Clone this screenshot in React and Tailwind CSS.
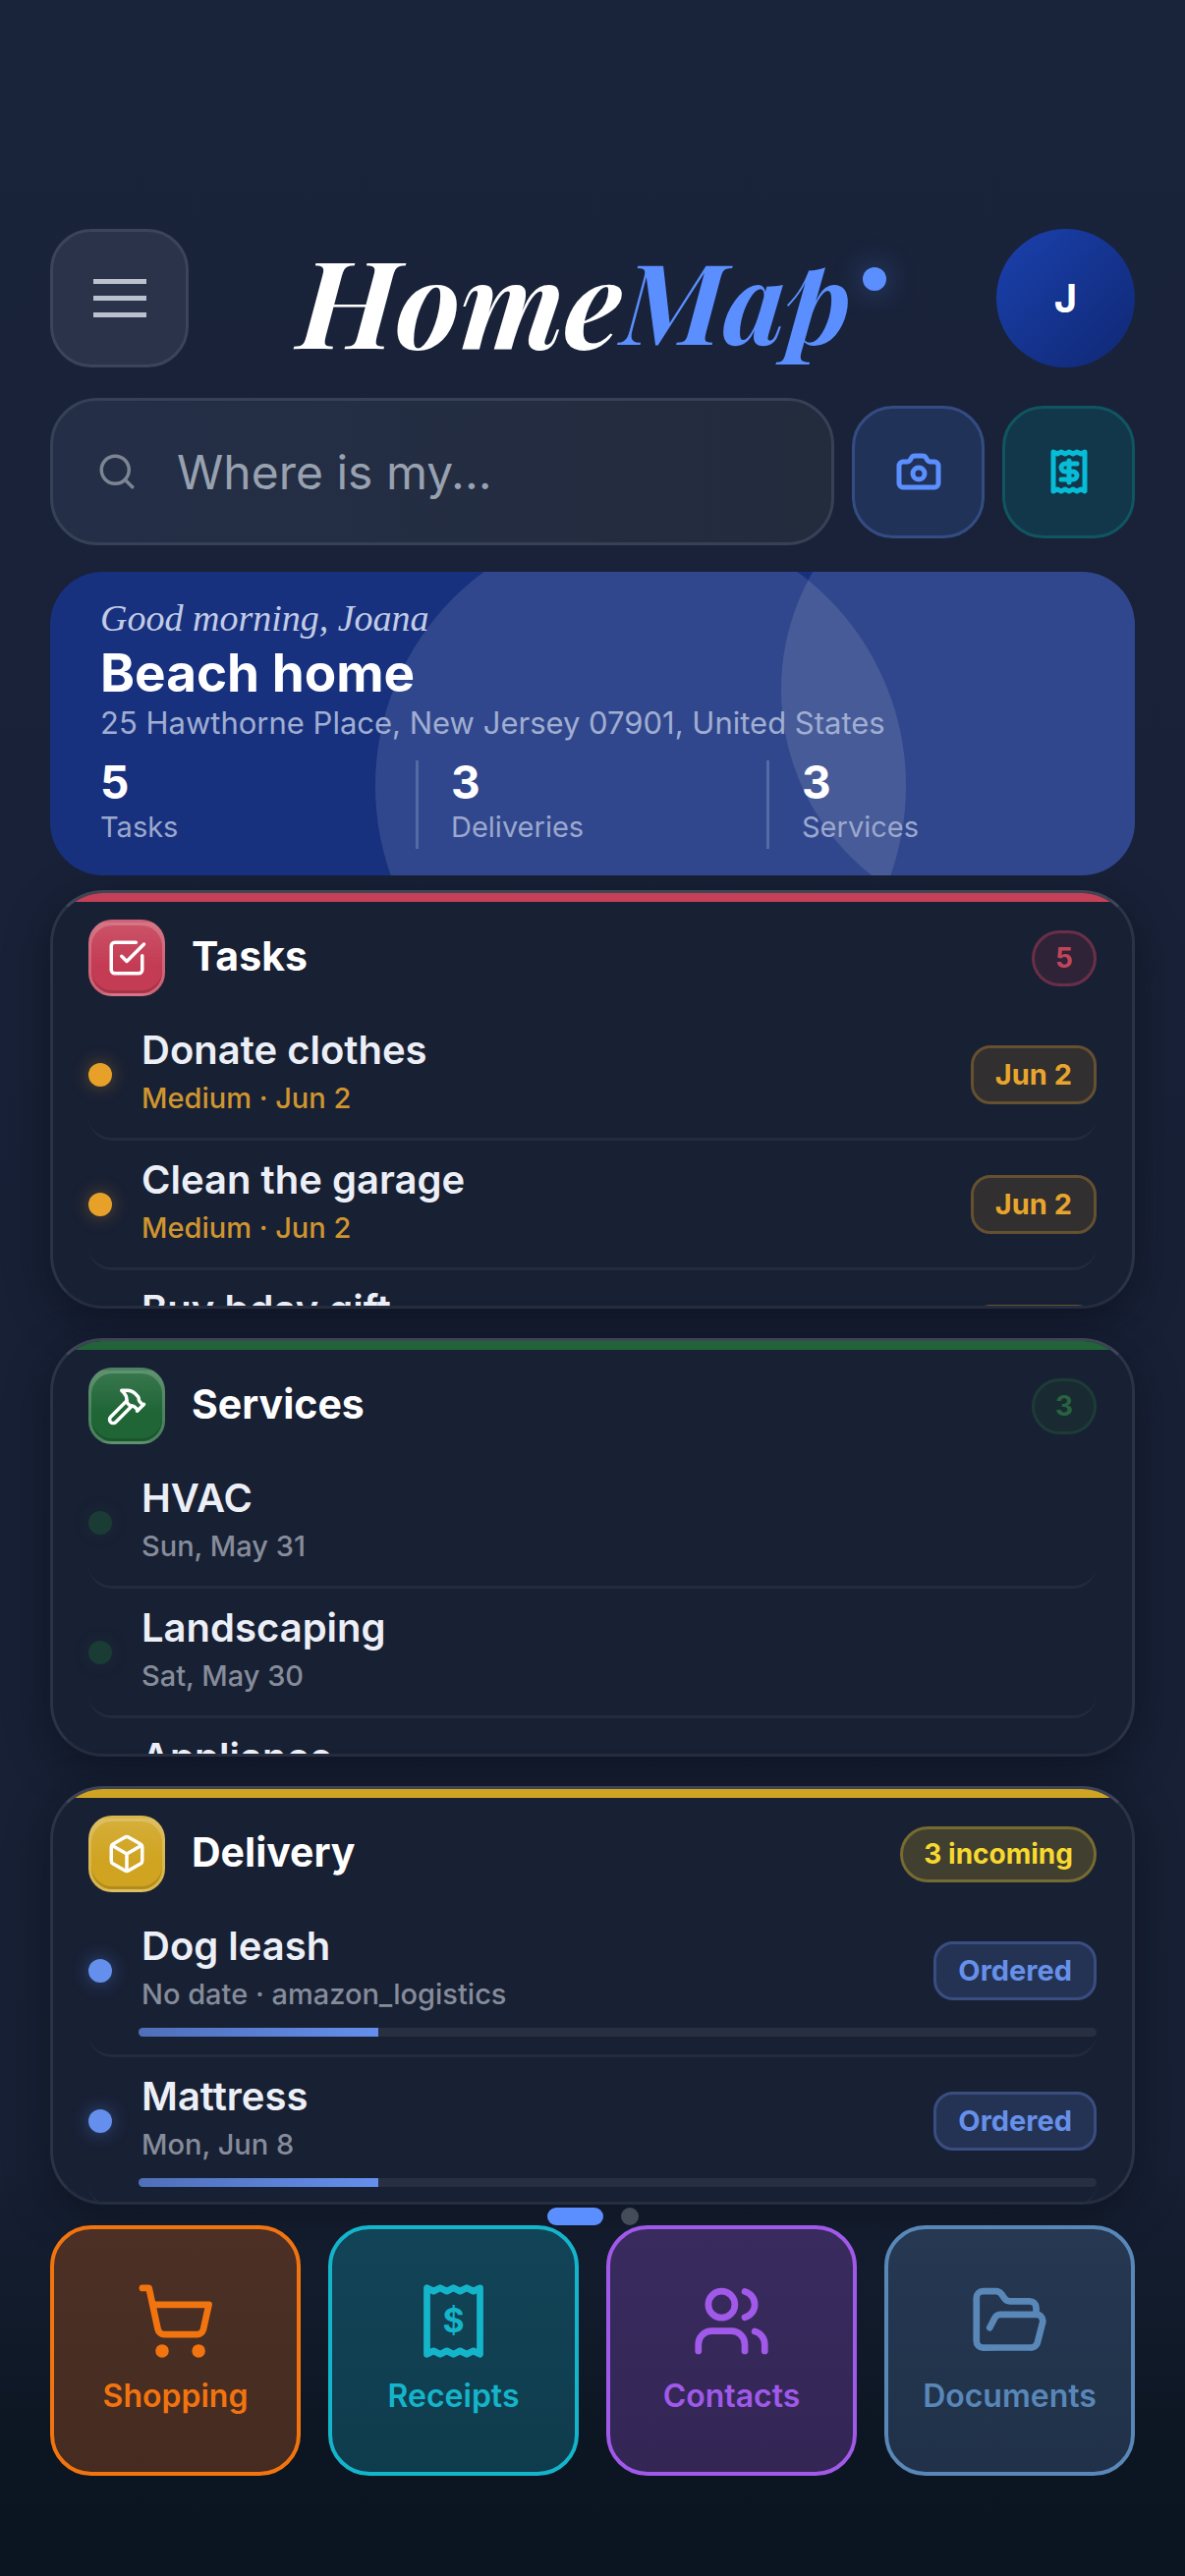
import React from 'react';
import { Box, Camera, FolderOpen, Hammer, Receipt, Search, ShoppingCart, SquareCheckBig, Users } from 'lucide-react';

const tasks = [
  { title: 'Donate clothes', sub: 'Medium · Jun 2', chip: 'Jun 2' },
  { title: 'Clean the garage', sub: 'Medium · Jun 2', chip: 'Jun 2' },
  { title: 'Buy bday gift', sub: 'Medium · Jun 2', chip: 'Jun 2' },
];

const services = [
  { title: 'HVAC', sub: 'Sun, May 31' },
  { title: 'Landscaping', sub: 'Sat, May 30' },
  { title: 'Appliance', sub: 'Fri, May 29' },
];

const deliveries = [
  { title: 'Dog leash', sub: 'No date · amazon_logistics', chip: 'Ordered', progress: 25 },
  { title: 'Mattress', sub: 'Mon, Jun 8', chip: 'Ordered', progress: 25 },
];

const stats = [
  { value: 5, label: 'Tasks' },
  { value: 3, label: 'Deliveries' },
  { value: 3, label: 'Services' },
];

const themes = {
  tasks: {
    bar: 'bg-[#c44056]',
    tile: 'bg-[#c43c54]',
    badge: 'bg-[#2f2437] border-[#6a2f48] text-[#c2445b]',
    dot: 'bg-[#e8a128] shadow-[0_0_18px_rgba(232,161,40,0.35)]',
    sub: 'text-[#cf952f]',
    chip: 'bg-[#312f2f] border-[#65502f] text-[#e8a52e]',
  },
  services: {
    bar: 'bg-[#236339]',
    tile: 'bg-[#1f6536]',
    badge: 'bg-[#1a2a33] border-[#1d3b37] text-[#27633e]',
    dot: 'bg-[#1b3b35] shadow-[0_0_18px_rgba(31,101,54,0.2)]',
    sub: 'text-[#868c9a]',
    chip: '',
  },
  delivery: {
    bar: 'bg-[#cfa423]',
    tile: 'bg-[#d0a420]',
    badge: 'bg-[#403f30] border-[#766b30] text-[#f7d92f]',
    dot: 'bg-[#648fec] shadow-[0_0_18px_rgba(91,143,255,0.4)]',
    sub: 'text-[#868c9a]',
    chip: 'bg-[#243354] border-[#3a4d80] text-[#6690ea]',
  },
};

const ReceiptDollar = ({ className }) => (
  <svg viewBox="0 0 24 24" fill="none" stroke="currentColor" strokeWidth="2" strokeLinejoin="round" className={className} aria-hidden="true">
    <path d="M4 2v20l2-1 2 1 2-1 2 1 2-1 2 1 2-1 2 1V2l-2 1-2-1-2 1-2-1-2 1-2-1-2 1Z" />
    <text x="12" y="15.5" textAnchor="middle" fontSize="10" fontWeight="700" fill="currentColor" stroke="none">$</text>
  </svg>
);

const Header = () => (
  <header className="flex items-center justify-between">
    <button
      type="button"
      aria-label="Menu"
      className="flex h-[141px] w-[141px] flex-col items-center justify-center gap-3 rounded-[42px] border-[3px] border-[#3b445a] bg-[#2b334a]"
    >
      <span className="h-[5px] w-[54px] bg-[#bcc2cd]" />
      <span className="h-[5px] w-[54px] bg-[#bcc2cd]" />
      <span className="h-[5px] w-[54px] bg-[#bcc2cd]" />
    </button>
    <h1 className="flex items-center font-['Playfair_Display','Liberation_Serif',serif] font-bold italic leading-none">
      <span className="text-[124px] text-white">Home</span>
      <span className="text-[114px] text-[#5b8fff]">Map</span>
      <span className="mb-10 ml-3 h-6 w-6 rounded-full bg-[#5b8fff] shadow-[0_0_30px_rgba(91,143,255,0.45)]" />
    </h1>
    <button
      type="button"
      className="h-[141px] w-[141px] rounded-full bg-linear-135 from-[#1a41ae] to-[#102874] text-[40px] font-bold text-white"
    >
      J
    </button>
  </header>
);

const SearchBar = () => (
  <div className="mt-[31px] flex items-center gap-[18px]">
    <label className="flex h-[150px] min-w-0 flex-1 items-center gap-10 rounded-[48px] border-[3px] border-[#374155] bg-linear-to-r from-[#242e47] to-[#232c3d] pl-11 pr-8">
      <Search className="h-[42px] w-[42px] shrink-0 text-[#7d8594]" />
      <input
        type="text"
        aria-label="Where is my..."
        placeholder="Where is my..."
        className="min-w-0 flex-1 bg-transparent text-5xl text-white outline-none placeholder:text-[#98a1af]"
      />
    </label>
    <button
      type="button"
      aria-label="Scan with camera"
      className="flex h-[135px] w-[135px] items-center justify-center rounded-[42px] border-[3px] border-[#344c82] bg-[#203257] text-[#5b8fff]"
    >
      <Camera className="h-12 w-12" strokeWidth={2.5} />
    </button>
    <button
      type="button"
      aria-label="Add receipt"
      className="flex h-[135px] w-[135px] items-center justify-center rounded-[42px] border-[3px] border-[#10555f] bg-[#12374a] text-[#07bcd6]"
    >
      <Receipt className="h-12 w-12" strokeWidth={2.5} />
    </button>
  </div>
);

const HomeCard = () => (
  <section className="relative mt-[27px] h-[309px] overflow-hidden rounded-[54px] bg-[#18317f] px-[51px] pt-5">
    <div className="absolute -bottom-[179px] left-[30%] h-[540px] w-[540px] rounded-full bg-white/11" />
    <div className="absolute -right-[120px] -top-[120px] h-[480px] w-[480px] rounded-full bg-white/11" />
    <div className="relative">
      <p className="font-['Satisfy','Liberation_Serif',cursive] text-[38px] italic leading-[54px] text-[#c3cce6]">Good morning, Joana</p>
      <h2 className="text-[53px] font-bold leading-[58px] text-white">Beach home</h2>
      <p className="text-[31px] leading-[44px] text-[#a0aed2]">25 Hawthorne Place, New Jersey 07901, United States</p>
      <dl className="mt-4 grid grid-cols-[324fr_357fr_321fr]">
        {stats.map((stat, i) => (
          <div
            key={stat.label}
            className={`flex h-[90px] flex-col-reverse justify-between border-[#546aa3] ${i < 2 ? 'border-r-[3px]' : ''} ${i > 0 ? 'pl-[33px]' : ''}`}
          >
            <dt className="text-[29px] leading-[44px] text-[#9ba8cd]">{stat.label}</dt>
            <dd className="text-[46px] font-bold leading-[44px] text-white">{stat.value}</dd>
          </div>
        ))}
      </dl>
    </div>
  </section>
);

const Row = ({ item, theme }) => (
  <li className="rounded-3xl border-b-[3px] border-[#232b3e]">
    <div className="flex items-center py-4">
      <span className={`h-6 w-6 shrink-0 rounded-full ${theme.dot}`} />
      <div className="ml-[30px] flex min-w-0 flex-1 flex-col gap-px">
        <h3 className="truncate text-[40px] font-semibold leading-[48px] text-[#eceff6]">{item.title}</h3>
        <p className={`text-[29px] font-medium leading-[48px] ${theme.sub}`}>{item.sub}</p>
      </div>
      {item.chip && (
        <span className={`rounded-[20px] border-[3px] px-[22px] text-[29px] font-bold leading-[54px] ${theme.chip}`}>{item.chip}</span>
      )}
    </div>
    {item.progress && (
      <div className="-mt-[6px] pb-[18px] pl-[51px]">
        <div className="h-[9px] overflow-hidden rounded-full bg-[#282f41]">
          <div className="h-full bg-linear-to-r from-[#4f6fb9] to-[#648fec]" style={{ width: `${item.progress}%` }} />
        </div>
      </div>
    )}
  </li>
);

const Panel = ({ title, badge, icon: Icon, theme, items }) => (
  <section className="h-[426px] overflow-hidden rounded-[54px] border-[3px] border-[#2b3346] border-b-[#252d40] border-t-[#3d4557] bg-[#182034] shadow-[0_12px_42px_rgba(10,12,22,0.55)]">
    <div className={`h-[9px] ${theme.bar}`} />
    <div className="px-9 pt-[18px]">
      <header className="flex items-center">
        <div
          className={`flex h-[78px] w-[78px] items-center justify-center rounded-3xl border-[3px] border-white/20 bg-linear-to-b from-white/12 to-transparent to-60% text-white shadow-[inset_0_3px_0_rgba(255,255,255,0.2),inset_0_-3px_0_rgba(0,0,0,0.15)] ${theme.tile}`}
        >
          <Icon className="h-[42px] w-[42px]" />
        </div>
        <h2 className="ml-[27px] flex-1 pb-[3px] text-[41px] font-bold text-white">{title}</h2>
        <span className={`rounded-full border-[3px] px-[21px] text-[28px] font-bold leading-[51px] ${theme.badge}`}>{badge}</span>
      </header>
      <ul className="mt-[15px]">
        {items.map((item) => (
          <Row key={item.title} item={item} theme={theme} />
        ))}
      </ul>
    </div>
  </section>
);

const shortcuts = [
  { label: 'Shopping', icon: ShoppingCart, style: 'border-[#f2740f] text-[#f2740f] from-[#4c3025] to-[#452b20]' },
  { label: 'Receipts', icon: ReceiptDollar, style: 'border-[#14b5cb] text-[#14b5cb] from-[#124457] to-[#0f3c4d]' },
  { label: 'Contacts', icon: Users, style: 'border-[#a059e8] text-[#a059e8] from-[#392b5e] to-[#332655]' },
  { label: 'Documents', icon: FolderOpen, style: 'border-[#5887b8] text-[#5887b8] from-[#263852] to-[#203149]' },
];

const App = () => {
  return (
    <div className="min-h-screen bg-[linear-gradient(180deg,#19233a_0%,#182036_50%,#172034_84%,#0c1622_95%,#0b1521_100%)] px-[51px] pb-[102px] pt-[233px] font-['Inter','Liberation_Sans',sans-serif]">
      <Header />
      <SearchBar />
      <main>
        <HomeCard />
        <div className="mt-[15px] flex flex-col gap-[30px]">
          <Panel title="Tasks" badge="5" icon={SquareCheckBig} theme={themes.tasks} items={tasks} />
          <Panel title="Services" badge="3" icon={Hammer} theme={themes.services} items={services} />
          <Panel title="Delivery" badge="3 incoming" icon={Box} theme={themes.delivery} items={deliveries} />
        </div>
        <div className="mt-[3px] flex justify-center gap-[18px]">
          <button type="button" aria-label="Page 1" className="h-[18px] w-[57px] rounded-full bg-[#5b8fff]" />
          <button type="button" aria-label="Page 2" className="h-[18px] w-[18px] rounded-full bg-[#444b59]" />
        </div>
      </main>
      <nav className="grid grid-cols-4 gap-7">
        {shortcuts.map(({ label, icon: Icon, style }) => (
          <a
            key={label}
            href={`#${label.toLowerCase()}`}
            className={`flex h-[255px] flex-col items-center justify-center gap-3 rounded-[42px] border-4 bg-linear-to-b ${style}`}
          >
            <Icon className="h-[81px] w-[81px]" />
            <span className="text-[32px] font-semibold leading-[48px]">{label}</span>
          </a>
        ))}
      </nav>
    </div>
  );
};

export default App;
